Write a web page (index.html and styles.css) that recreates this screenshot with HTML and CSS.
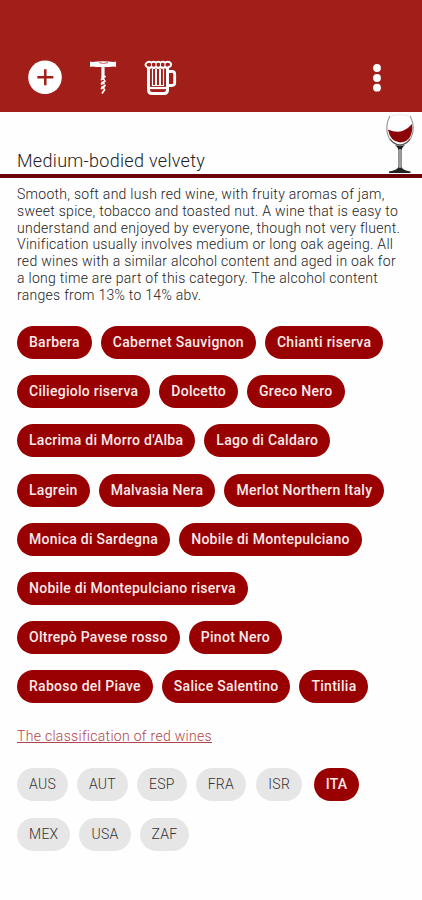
FILE: index.html
```html
<!DOCTYPE html>
<html lang="en">
<head>
  <meta charset="UTF-8">
  <meta name="viewport" content="width=device-width, initial-scale=1.0">
  <title>Medium-bodied velvety</title>
  <link rel="stylesheet" href="styles.css">
</head>
<body>
  <header class="toolbar">
    <svg class="icon-add" viewBox="0 0 34 34" width="34" height="34">
      <circle cx="17" cy="17.300" r="16.800" fill="#fff"/>
      <path d="M17.300 9.300v16M9.300 17.300h16" stroke="#a11f18" stroke-width="2.500"/>
    </svg>
    <svg class="icon-corkscrew" viewBox="0 0 28 34" width="28" height="34" fill="none" stroke="#fff">
      <path d="M1 1.500l2 .5q11-1.500 22 0l2-.5v5.500l-2-.5q-5 .5-9 .5h-4q-4 0-9-.5l-2 .5z" fill="#fff" stroke="none"/>
      <path d="M10 2.700q4.500 1.500 9 0" stroke="#a11f18" stroke-width=".7"/>
      <path d="M14 6v11" stroke-width="3.200"/>
      <path d="M16.500 16l-4.500 4M16.500 20.500l-4.500 4M16.500 25l-4.500 4M16 29l-3 4.500M12.500 17l3 3M12.500 22l3 2M12.500 26.500l3 2" stroke-width="1.700"/>
    </svg>
    <svg class="icon-beer" viewBox="0 0 34 36" width="34" height="36" fill="none" stroke="#fff">
      <path d="M4.500 7v23q0 3.500 3.500 3.500h12q3.500 0 3.500-3.500V7" stroke-width="3"/>
      <path d="M24 11.500h4q2.700 0 2.700 2.700v8.600q0 2.700-2.700 2.700h-4" stroke-width="2.800"/>
      <path d="M8.500 9v16.500h11V9" stroke-width="1.200"/>
      <path d="M12 9v16M16 9v16" stroke-width="2"/>
      <path d="M5 28h18" stroke-width="2.200"/>
      <path d="M3 7q2.200 1.600 4.500 0 2.200 1.600 4.500 0 2.200 1.600 4.500 0 2.200 1.600 4.500 0 2.200 1.600 4.500-.5" stroke-width="2.300"/>
      <path d="M3 7q-3-2.500 0-4.500 2-1.500 4.500 0 2.200-1.600 4.500 0 2.200-1.600 4.500 0 2.200-1.600 4.500 0 3-1.600 5 0 2.500 2.200-.5 4.500" stroke-width="2"/>
      <path d="M7.500 3v4M12 3v4M16.500 3v4M21 3v4" stroke-width="1.100"/>
    </svg>
    <svg class="icon-more" viewBox="0 0 8 28" width="8" height="28" fill="#fff">
      <circle cx="4" cy="4" r="3.900"/><circle cx="4" cy="14" r="3.900"/><circle cx="4" cy="23.700" r="3.900"/>
    </svg>
  </header>

  <div class="heading">
    <h1>Medium-bodied velvety</h1>
    <svg class="glass" viewBox="0 0 30 62" width="30" height="62">
      <path d="M5 4Q1 11 2 19q2 13 13 14 11-1 13-14 1-8-3-15" fill="#fefefe" stroke="#999" stroke-width="1.200"/>
      <path d="M5 4q10-3 20 0" fill="none" stroke="#ddd" stroke-width=".6"/>
      <path d="M3 17.500q8 3.500 14.500 1.500 6-2.500 9.500-7 1 8-2 13-3 5-10 5.500Q5 29.500 3 17.500z" fill="#8b0508"/>
      <path d="M5 27q4 5.500 10 6 6-.5 10-6" fill="none" stroke="#555" stroke-width="1.200"/>
      <path d="M10 33q5 1.500 10 0-3 2-3.500 5v17q1 3 9 4.500V61H4v-1.500q8-1.500 9.500-4.500V38q-.5-3-3.500-5z" fill="#222"/>
      <path d="M15 37v19" stroke="#aaa" stroke-width="1.800"/>
    </svg>
  </div>

  <main>
    <p class="description">
      Smooth, soft and lush red wine, with fruity aromas of jam,<br>
      sweet spice, tobacco and toasted nut. A wine that is easy to<br>
      understand and enjoyed by everyone, though not very fluent.<br>
      Vinification usually involves medium or long oak ageing. All<br>
      red wines with a similar alcohol content and aged in oak for<br>
      a long time are part of this category. The alcohol content<br>
      ranges from 13% to 14% abv.
    </p>

    <div class="chips wines">
      <span class="chip">Barbera</span>
      <span class="chip">Cabernet Sauvignon</span>
      <span class="chip">Chianti riserva</span>
      <span class="chip">Ciliegiolo riserva</span>
      <span class="chip">Dolcetto</span>
      <span class="chip">Greco Nero</span>
      <span class="chip">Lacrima di Morro d'Alba</span>
      <span class="chip">Lago di Caldaro</span>
      <span class="chip">Lagrein</span>
      <span class="chip">Malvasia Nera</span>
      <span class="chip">Merlot Northern Italy</span>
      <span class="chip">Monica di Sardegna</span>
      <span class="chip">Nobile di Montepulciano</span>
      <span class="chip">Nobile di Montepulciano riserva</span>
      <span class="chip">Oltrepò Pavese rosso</span>
      <span class="chip">Pinot Nero</span>
      <span class="chip">Raboso del Piave</span>
      <span class="chip">Salice Salentino</span>
      <span class="chip">Tintilia</span>
    </div>

    <a class="link" href="#">The classification of red wines</a>

    <div class="chips countries">
      <span class="chip light">AUS</span>
      <span class="chip light">AUT</span>
      <span class="chip light">ESP</span>
      <span class="chip light">FRA</span>
      <span class="chip light narrow">ISR</span>
      <span class="chip narrow">ITA</span>
      <span class="chip light">MEX</span>
      <span class="chip light">USA</span>
      <span class="chip light">ZAF</span>
    </div>
  </main>
</body>
</html>
```
FILE: styles.css
```css
* {
  box-sizing: border-box;
}
body {
  margin: 0;
  background-color: #fefefe;
  color: #222;
  font-family: Roboto, sans-serif;
  font-size: 14px;
}
.toolbar {
  display: flex;
  align-items: flex-start;
  height: 112px;
  padding: 60px 41px 0 28px;
  background-color: #a11f18;
}
.icon-corkscrew {
  margin-left: 27px;
}
.icon-beer {
  margin-left: 27px;
}
.icon-more {
  margin: 4px 0 0 auto;
}
.heading {
  display: flex;
  justify-content: space-between;
  align-items: flex-end;
  height: 66px;
  padding: 0 7px 0 17px;
  border-bottom: 4px solid #680208;
}
h1 {
  margin: 0 0 2px;
  font-size: 18px;
  line-height: 22px;
  font-weight: 300;
  letter-spacing: 0.3px;
}
.glass {
  display: block;
}
main {
  padding: 8px 17px 0;
}
.description {
  margin: 0;
  line-height: 16.8px;
  font-weight: 300;
  letter-spacing: 0.28px;
  white-space: nowrap;
}
.chips {
  display: flex;
  flex-wrap: wrap;
  gap: 16.2px 9px;
}
.wines {
  margin-top: 22.5px;
}
.chip {
  height: 33px;
  padding: 0 12px;
  border-radius: 17px;
  background-color: #980001;
  color: #fbeaea;
  line-height: 33px;
  font-weight: 500;
  letter-spacing: 0.27px;
  white-space: nowrap;
}
.light {
  background-color: #e6e6e6;
  color: #333;
  font-weight: 300;
}
.narrow {
  margin: 0 1.3px;
}
.link {
  display: block;
  width: fit-content;
  margin-top: 25px;
  color: #b2444b;
  font-weight: 300;
  line-height: 17px;
  letter-spacing: 0.3px;
}
.countries {
  margin-top: 23px;
}
```
